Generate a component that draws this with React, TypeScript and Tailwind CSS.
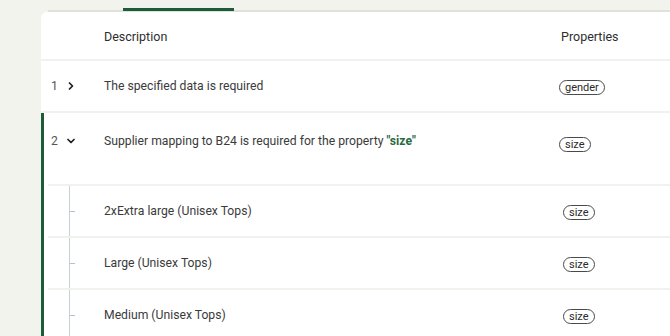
import { ChevronRight, ChevronDown } from 'lucide-react';

interface SubRow {
  label: string;
  prop: string;
}

const subRows: SubRow[] = [
  { label: '2xExtra large (Unisex Tops)', prop: 'size' },
  { label: 'Large (Unisex Tops)', prop: 'size' },
  { label: 'Medium (Unisex Tops)', prop: 'size' },
];

function Pill({ children }: { children: string }) {
  return (
    <span className="inline-flex items-center h-[15px] px-[5px] rounded-full border border-[#4a4a4a] text-[11px] leading-none text-[#2a2a2a]">
      {children}
    </span>
  );
}

export default function App() {
  return (
    <div
      className="w-[670px] h-[336px] overflow-hidden bg-[#f3f3ee] text-[12.2px] text-[#3b3b3b]"
      style={{ fontFamily: 'Roboto, "Noto Sans", sans-serif' }}
    >
      {/* tab strip */}
      <div className="h-[12px] ml-[48px] border-b-2 border-[#e1e1db] flex items-end">
        <div className="ml-[75px] w-[111px] h-[3px] -mb-px bg-[#1d5c39]" />
      </div>

      {/* card */}
      <div className="ml-[41px] w-[680px] bg-white rounded-tl-md">
        {/* header */}
        <div className="flex items-center h-[49px] pt-[3px] border-b-2 border-[#f1f1ed] text-[#2e2e2e] text-[12.5px]">
          <div className="w-[63px]" />
          <div className="w-[457px]">Description</div>
          <div>Properties</div>
        </div>

        {/* row 1 */}
        <div className="flex items-center h-[52px] pt-px border-b-2 border-[#f1f1ed]">
          <div className="w-[63px] pl-[10px] flex items-center gap-[7px] text-[#555]">
            <span>1</span>
            <ChevronRight size={12} strokeWidth={3.5} className="text-[#1f1f1f]" />
          </div>
          <div className="w-[455px]">The specified data is required</div>
          <div className="pt-[2px]">
            <Pill>gender</Pill>
          </div>
        </div>

        {/* row 2, expanded */}
        <div className="border-l-[3px] border-[#1d5c39]">
          <div className="flex items-start h-[71px] pt-[19px]">
            <div className="w-[60px] pl-[7px] flex items-center gap-[7px] text-[#555]">
              <span>2</span>
              <ChevronDown size={12} strokeWidth={3.5} className="text-[#1f1f1f]" />
            </div>
            <div className="w-[455px]">
              Supplier mapping to B24 is required for the property{' '}
              <span className="font-bold text-[#2a6a3f]">"size"</span>
            </div>
            <div className="pt-[3px]">
              <Pill>size</Pill>
            </div>
          </div>

          <div className="ml-[4px]">
            {subRows.map((r) => (
              <div key={r.label} className="flex items-stretch h-[52px] border-t-2 border-[#f1f1ed]">
                <div className="w-[56px] pl-[21px] flex">
                  <div className="border-l border-[#c7cfd6] flex items-center">
                    <div className="w-[5px] h-px bg-[#b9c1c8]" />
                  </div>
                </div>
                <div className="w-[459px] flex items-center">{r.label}</div>
                <div className="flex items-center pt-[2px]">
                  <Pill>{r.prop}</Pill>
                </div>
              </div>
            ))}
          </div>
        </div>
      </div>
    </div>
  );
}
